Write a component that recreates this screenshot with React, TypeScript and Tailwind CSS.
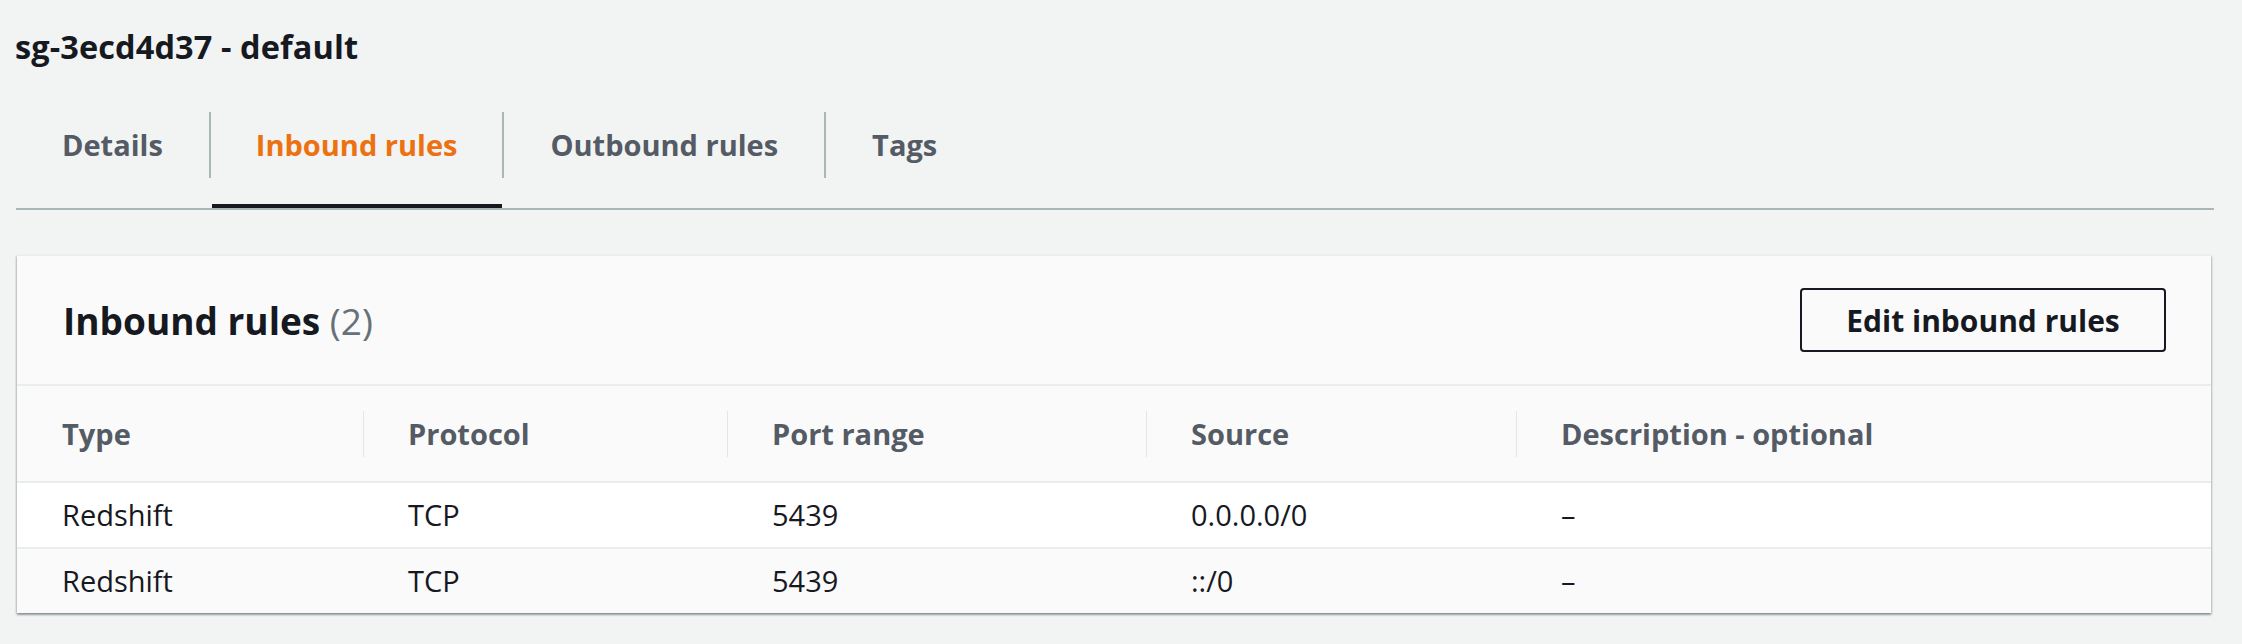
const TABS = [
  { label: "Details", active: false },
  { label: "Inbound rules", active: true },
  { label: "Outbound rules", active: false },
  { label: "Tags", active: false },
];

const COLUMNS = ["Type", "Protocol", "Port range", "Source", "Description - optional"];

const RULES = [
  { type: "Redshift", protocol: "TCP", port: "5439", source: "0.0.0.0/0", description: "–" },
  { type: "Redshift", protocol: "TCP", port: "5439", source: "::/0", description: "–" },
];

const GRID = "grid grid-cols-[346px_364px_419px_370px_1fr]";

export default function App() {
  return (
    <div
      className="min-h-screen bg-[#f2f3f3] pl-[16px] pr-[28px] text-[#16191f]"
      style={{ fontFamily: '"Open Sans", "Noto Sans", sans-serif' }}
    >
      <div className="flex h-[94px] items-center">
        <h1 className="-ml-px text-[32.5px] font-bold leading-none tracking-[0.1px]">sg-3ecd4d37 - default</h1>
      </div>

      {/* tabs */}
      <div className="flex border-b-2 border-[#aab7b8]">
        {TABS.map((tab, index) => (
          <div key={tab.label} className="relative flex h-[114px] items-start pt-[18px]">
            <div
              className={
                index === 0
                  ? "flex h-[66px] items-center px-[46px]"
                  : index === 1
                    ? "flex h-[66px] items-center border-l-2 border-[#aab7b8] px-[45px]"
                    : "flex h-[66px] items-center border-l-2 border-[#aab7b8] px-[46px]"
              }
            >
              <span
                className={
                  tab.active
                    ? "text-[29px] font-bold text-[#ec7211]"
                    : "text-[29px] font-bold text-[#545b64]"
                }
              >
                {tab.label}
              </span>
            </div>
            {tab.active && <div className="absolute bottom-0 left-[3px] right-0 h-[4px] bg-[#16191f]" />}
          </div>
        ))}
      </div>

      {/* panel */}
      <section className="mt-[45px] ml-px mr-[3px] border-t border-[#eaeded] bg-[#fafafa] shadow-[0_2px_2px_0_rgba(0,28,36,0.3),1px_1px_2px_0_rgba(0,28,36,0.15),-1px_1px_2px_0_rgba(0,28,36,0.15)]">
        <div className="flex h-[130px] items-center justify-between border-b-2 border-[#eaeded] pl-[46px] pr-[45px]">
          <h2 className="text-[37px] font-bold leading-none">
            Inbound rules <span className="font-normal text-[#687078]">(2)</span>
          </h2>
          <button className="h-[64px] w-[366px] rounded-[4px] border-2 border-[#16191f] bg-[#fafafa] text-[30px] font-bold text-[#16191f]">
            Edit inbound rules
          </button>
        </div>

        <div className={`${GRID} h-[97px] items-center border-b-2 border-[#eaeded]`}>
          {COLUMNS.map((col, index) => (
            <div
              key={col}
              className={
                index === 0
                  ? "flex h-[46px] items-center pl-[45px]"
                  : "flex h-[46px] items-center border-l border-[#e3e6e6] pl-[44px]"
              }
            >
              <span className="text-[29px] font-bold text-[#545b64]">{col}</span>
            </div>
          ))}
        </div>

        {RULES.map((rule, index) => (
          <div
            key={rule.source}
            className={
              index === 0
                ? `${GRID} h-[66px] items-center border-b-2 border-[#eaeded] bg-white text-[29px]`
                : `${GRID} h-[64px] items-center bg-[#fafafa] text-[29px]`
            }
          >
            <div className="pl-[45px]">{rule.type}</div>
            <div className="pl-[45px]">{rule.protocol}</div>
            <div className="pl-[45px]">{rule.port}</div>
            <div className="pl-[45px]">{rule.source}</div>
            <div className="pl-[45px]">{rule.description}</div>
          </div>
        ))}
      </section>
    </div>
  );
}
